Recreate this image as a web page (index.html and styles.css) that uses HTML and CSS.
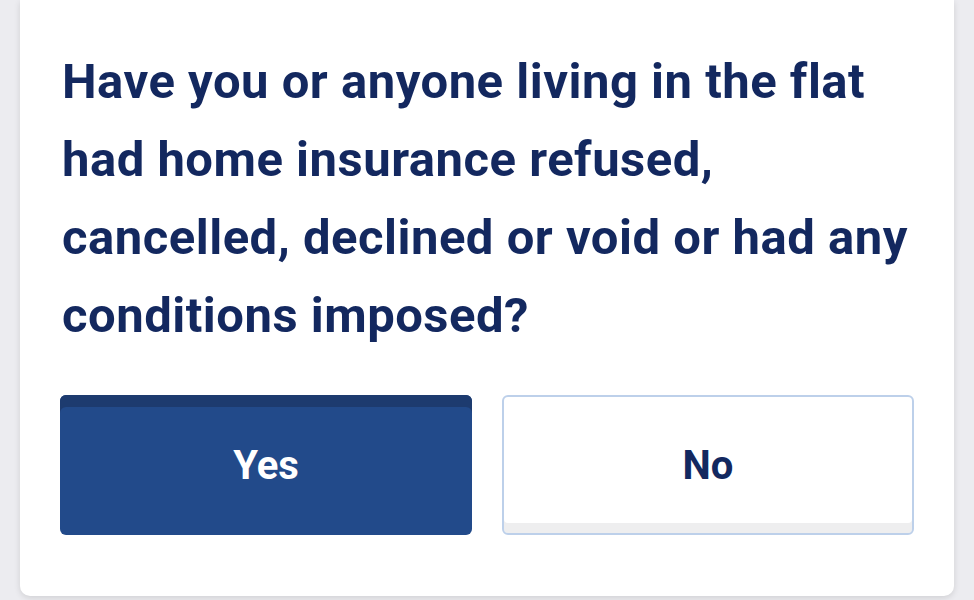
FILE: index.html
```html
<!DOCTYPE html>
<html lang="en">
<head>
    <meta charset="UTF-8">
    <meta name="viewport" content="width=device-width, initial-scale=1.0">
    <title>Home insurance question</title>
    <link rel="stylesheet" href="styles.css">
</head>
<body>
    <div class="page">
        <div class="question-card">
            <h2 class="question-title">Have you or anyone living in the flat had home insurance refused, cancelled, declined or void or had any conditions imposed?</h2>
            <div class="answer-row">
                <button type="button" class="answer-btn answer-btn-selected">Yes</button>
                <button type="button" class="answer-btn">No</button>
            </div>
        </div>
    </div>
</body>
</html>
```

FILE: styles.css
```css
* {
    margin: 0;
    padding: 0;
    box-sizing: border-box;
}

body {
    background-color: #ececf0;
    font-family: 'Roboto', 'Liberation Sans', sans-serif;
}

.page {
    padding: 0 20px;
    height: 600px;
    overflow: hidden;
}

.question-card {
    background-color: white;
    border-radius: 0 0 10px 10px;
    box-shadow: 0 2px 6px rgba(0,0,0,0.12);
    padding: 43px 40px 61px 40px;
}

.question-title {
    color: #13285f;
    font-size: 49px;
    font-weight: 700;
    line-height: 78px;
    letter-spacing: 0.5px;
    padding-left: 2px;
    margin-bottom: 40px;
}

.answer-row {
    display: grid;
    grid-template-columns: 1fr 1fr;
    gap: 30px;
}

.answer-btn {
    height: 140px;
    border: 2px solid #bdd0ea;
    border-radius: 6px;
    background-color: white;
    box-shadow: inset 0 -10px 0 #eeeeef;
    color: #13285f;
    font-family: inherit;
    font-size: 40px;
    font-weight: 700;
    cursor: pointer;
}

.answer-btn-selected {
    border: none;
    background-color: #224a8a;
    box-shadow: inset 0 12px 0 #1d3b6f;
    color: white;
}
```
